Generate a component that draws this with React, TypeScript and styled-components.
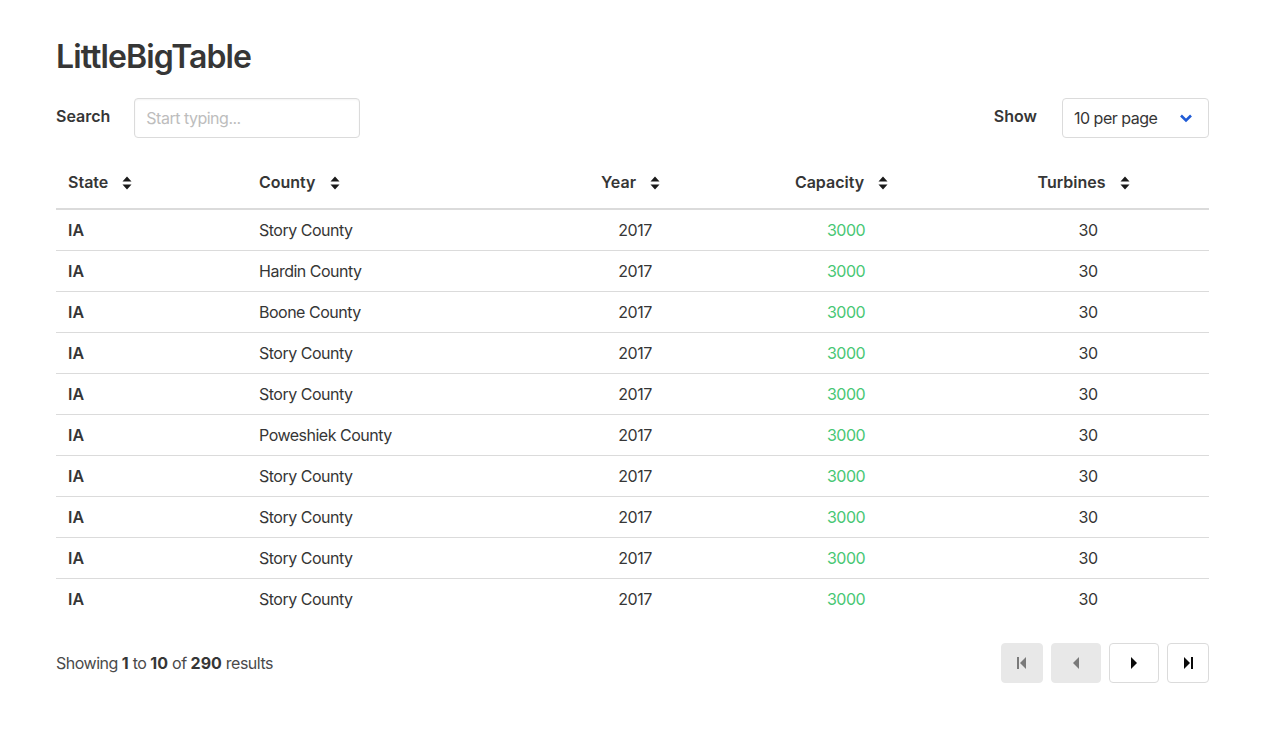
import React from "react";
import styled, { createGlobalStyle } from "styled-components";

const Global = createGlobalStyle`
  html, body { margin: 0; padding: 0; background: #fff; }
  body { font-family: Inter, "Noto Sans", "Liberation Sans", sans-serif; font-size: 16px; color: #4a4a4a; line-height: 24px; }
  * { box-sizing: border-box; }
`;

const Page = styled.div`
  padding: 37px 56px 40px;
`;

const Title = styled.h1`
  margin: 0;
  font-size: 32px;
  line-height: 40px;
  font-weight: 600;
  color: #363636;
  letter-spacing: -0.9px;
`;

const Toolbar = styled.div`
  margin-top: 21px;
  display: flex;
  align-items: center;
  justify-content: space-between;
  height: 40px;
`;

const Field = styled.div<{ gap: number }>`
  display: flex;
  align-items: center;
  gap: ${(p) => p.gap}px;
`;

const Label = styled.label`
  font-weight: 600;
  color: #363636;
  font-size: 16px;
  margin-top: -4px;
`;

const Input = styled.input`
  width: 226px;
  height: 40px;
  border: 1px solid #dbdbdb;
  border-radius: 4px;
  padding: 0 11px;
  font-family: inherit;
  font-size: 16px;
  letter-spacing: -0.5px;
  color: #363636;
  box-shadow: inset 0 1px 2px rgba(10, 10, 10, 0.05);
  outline: none;
  &::placeholder { color: #bdbdbd; }
`;

const Select = styled.div`
  width: 147px;
  height: 40px;
  border: 1px solid #dbdbdb;
  border-radius: 4px;
  padding: 0 15px 0 11px;
  display: flex;
  align-items: center;
  justify-content: space-between;
  color: #363636;
  font-size: 16px;
  letter-spacing: -0.5px;
`;

const Table = styled.table`
  margin-top: 20px;
  width: 100%;
  border-collapse: collapse;
  table-layout: fixed;
`;

const Th = styled.th<{ align?: string; w: number }>`
  width: ${(p) => p.w}px;
  text-align: ${(p) => p.align || "left"};
  padding: 12px ${(p) => (p.align === "center" ? 21 : 12)}px 14px 12px;
  font-weight: 600;
  color: #363636;
  border-bottom: 2px solid #dbdbdb;
  white-space: nowrap;
`;

const Tr = styled.tr`
  &:not(:last-child) td { border-bottom: 1px solid #dbdbdb; }
`;

const Td = styled.td<{ align?: string; strong?: boolean; green?: boolean }>`
  padding: 8px 12px;
  text-align: ${(p) => p.align || "left"};
  font-weight: ${(p) => (p.strong ? 600 : 400)};
  letter-spacing: ${(p) => (p.strong ? 0 : -0.5)}px;
  color: ${(p) => (p.green ? "#48c774" : "#363636")};
`;

const SortIcon = styled.svg`
  margin-left: 14px;
  vertical-align: -2px;
`;

const Footer = styled.div`
  margin-top: 24px;
  display: flex;
  align-items: center;
  justify-content: space-between;
`;

const Summary = styled.div`
  color: #4a4a4a;
  letter-spacing: -0.5px;
  b { font-weight: 700; color: #363636; letter-spacing: 0; }
`;

const Pager = styled.div`
  display: flex;
  gap: 8px;
`;

const PageButton = styled.button<{ w: number; disabled?: boolean }>`
  width: ${(p) => p.w}px;
  height: 40px;
  border-radius: 4px;
  border: 1px solid ${(p) => (p.disabled ? "#e8e8e8" : "#dbdbdb")};
  background: ${(p) => (p.disabled ? "#e8e8e8" : "#fff")};
  display: flex;
  align-items: center;
  justify-content: center;
  padding: 0;
  color: ${(p) => (p.disabled ? "#7a7a7a" : "#0a0a0a")};
`;

const Sort = () => (
  <SortIcon width="10" height="14" viewBox="0 0 10 14">
    <path d="M5 0.5 L9.5 5.5 L0.5 5.5 Z M5 13.5 L9.5 8.5 L0.5 8.5 Z" fill="#1a1a1a" />
  </SortIcon>
);

const Chevron = () => (
  <svg width="14" height="10" viewBox="0 0 14 10">
    <path d="M2 2.5 L7 7.5 L12 2.5" fill="none" stroke="#1f5bd6" strokeWidth="2.6" strokeLinejoin="miter" />
  </svg>
);

const rows = [
  "Story County",
  "Hardin County",
  "Boone County",
  "Story County",
  "Story County",
  "Poweshiek County",
  "Story County",
  "Story County",
  "Story County",
  "Story County",
];

export default function App() {
  return (
    <>
      <Global />
      <Page>
        <Title>LittleBigTable</Title>
        <Toolbar>
          <Field gap={24}>
            <Label>Search</Label>
            <Input placeholder="Start typing..." />
          </Field>
          <Field gap={25}>
            <Label>Show</Label>
            <Select>
              <span>10 per page</span>
              <Chevron />
            </Select>
          </Field>
        </Toolbar>
        <Table>
          <thead>
            <tr>
              <Th w={191}>State<Sort /></Th>
              <Th w={298}>County<Sort /></Th>
              <Th w={180} align="center">Year<Sort /></Th>
              <Th w={242} align="center">Capacity<Sort /></Th>
              <Th w={242} align="center">Turbines<Sort /></Th>
            </tr>
          </thead>
          <tbody>
            {rows.map((c, i) => (
              <Tr key={i}>
                <Td strong>IA</Td>
                <Td>{c}</Td>
                <Td align="center">2017</Td>
                <Td align="center" green>3000</Td>
                <Td align="center">30</Td>
              </Tr>
            ))}
          </tbody>
        </Table>
        <Footer>
          <Summary>
            Showing <b>1</b> to <b>10</b> of <b>290</b> results
          </Summary>
          <Pager>
            <PageButton w={42} disabled>
              <svg width="12" height="14" viewBox="0 0 12 14">
                <rect x="1" y="1" width="2" height="12" fill="currentColor" />
                <path d="M10 1 L4 7 L10 13 Z" fill="currentColor" />
              </svg>
            </PageButton>
            <PageButton w={50} disabled>
              <svg width="8" height="14" viewBox="0 0 8 14">
                <path d="M7 1 L1 7 L7 13 Z" fill="currentColor" />
              </svg>
            </PageButton>
            <PageButton w={50}>
              <svg width="8" height="14" viewBox="0 0 8 14">
                <path d="M1 1 L7 7 L1 13 Z" fill="currentColor" />
              </svg>
            </PageButton>
            <PageButton w={42}>
              <svg width="12" height="14" viewBox="0 0 12 14">
                <path d="M2 1 L8 7 L2 13 Z" fill="currentColor" />
                <rect x="9" y="1" width="2" height="12" fill="currentColor" />
              </svg>
            </PageButton>
          </Pager>
        </Footer>
      </Page>
    </>
  );
}
